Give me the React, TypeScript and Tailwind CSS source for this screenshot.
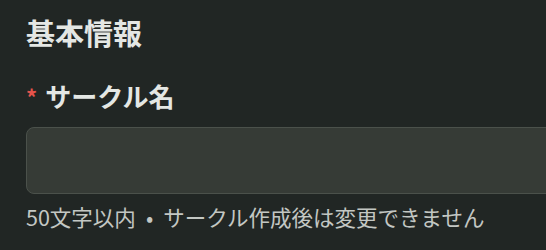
export default function App() {
  return (
    <div
      className="min-h-[250px] w-full overflow-hidden bg-[#212624] pl-[26px] pt-[12px]"
      style={{ fontFamily: '"Noto Sans CJK JP", "Noto Sans", sans-serif' }}
    >
      <h2 className="text-[29px] font-bold leading-[40px] text-[#e4e7e4]">基本情報</h2>
      <label className="mt-[26px] flex items-center gap-[8px] text-[26px] font-bold leading-[36px] text-[#e4e7e4]">
        <span className="text-[22px] text-[#e5534b]">*</span>
        サークル名
      </label>
      <div className="mt-[13px] h-[67px] w-[560px] rounded-[8px] border border-[#4b514b] bg-[#363b36]" />
      <p className="mt-[7px] text-[21.5px] leading-[32px] text-[#c3c7c3]">
        50文字以内<span className="px-[10px]">•</span>サークル作成後は変更できません
      </p>
    </div>
  );
}
